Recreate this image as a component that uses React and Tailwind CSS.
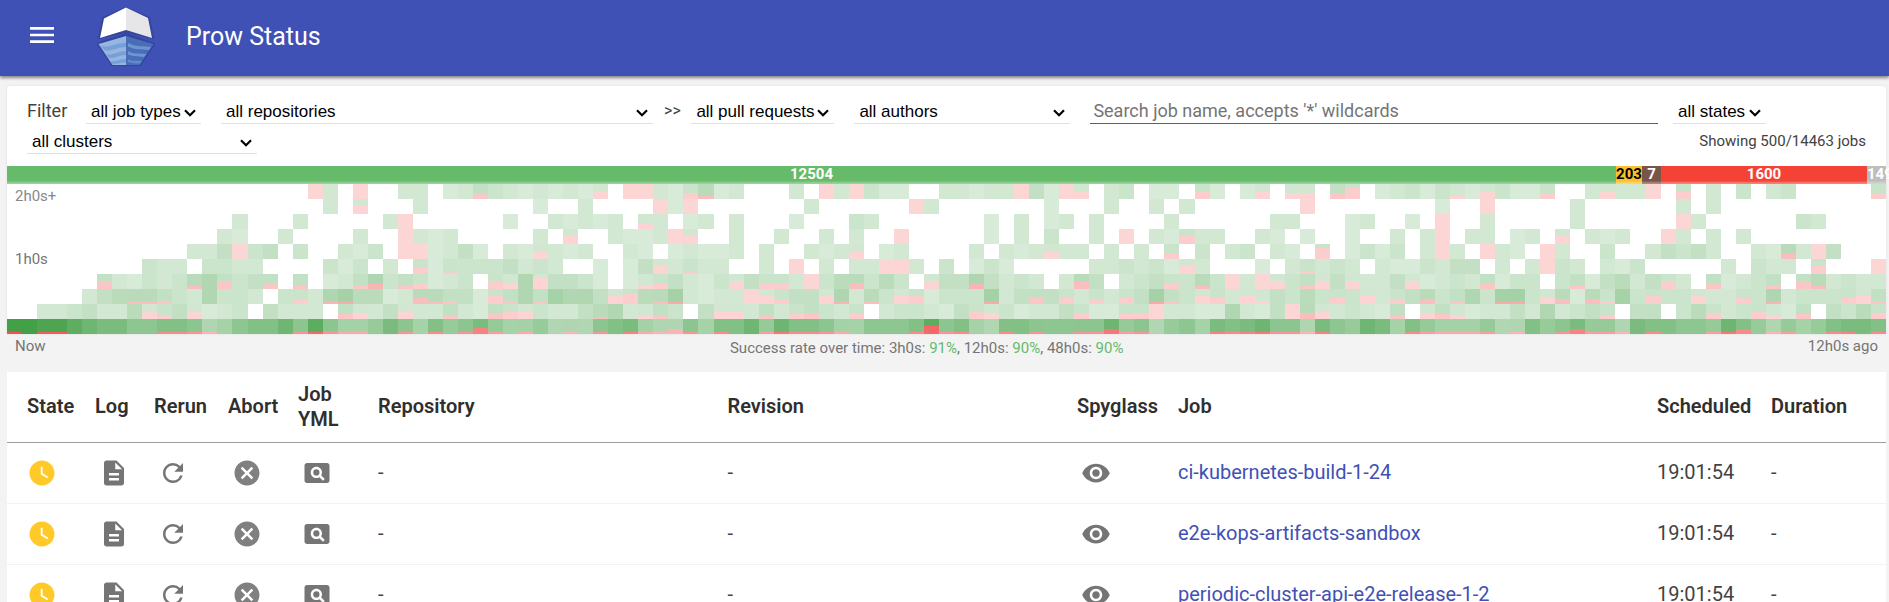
import React from "react";
import {
  MdCancel,
  MdDescription,
  MdMenu,
  MdPageview,
  MdRefresh,
  MdRemoveRedEye,
  MdWatchLater,
} from "react-icons/md";

// Job duration histogram. Rows run from the longest durations to the shortest,
// columns from now into the past. A cell is "." (no jobs) or a density key with
// an optional hex digit for the height of its failed share; "3x." repeats a cell.
const HISTOGRAM = [
  `20x. 2f 2 . 2f 2x. 2x2 . 1 2
   45 3 2 1 2 1 2 1 28 . 2f 2f 2 1 36 53 1 2 3x. 2 . 2f 2 2f 3 1 1 2x.
   2 2 1 2 2 2f 4 1 2f 28 . 2 3 . 1 1 . 38 1 . 1 28 . 26 26 . 46 3c . 1 2
   3 1 3 23 1 28 3 1 1 35 2x. 2 28 2 2 2f . 38 . 2 . 3 . 2 3 5x. 36`,
  `21x. 2 . 28 3x. 2 3x.
   4x. 1 2x. 2 4x. 2f 1 2f 7x. 2 6x. 2f 2
   7x. 1 3x. 2 2x. 2 . 2 7x. 2f 6x.
   2x. 1 2x. 2f 5x. 2 6x. 2 . 2 11x.`,
  `15x. 2 3x. 2 5x. 2 2f 4x.
   2x. 1 2x. 2 1 2 1 2 . 26 2 . 1 2 . 2 3x. 1 3x. 3 2 4x.
   3x. 1 . 2 . 1 2 . 2 4x. 2 6x. 2 2 3x. 1 2 2x.
   1 . 2f 2x. 2 5x. 2 6x. 2f 2 6x. 3 2 4x.`,
  `14x. 2 1 2x. 2 4x. 2 2x. 2f 2 1 2 .
   4x. 2 . 28 2x. 2 1 1 2 2f 28 2x. 2 2x. 2 2x. 2 . 2 2x. 2f 2x.
   3x. 1 . 2 . 3 2x. 2 . 2f . 2 1 38 2 2 2x. 2 1 . 1 2x. 1 2x. 2
   . 2 2f . 2 2 . 1 2 . 28 . 2 1 2 2x. 2f 2 . 2 . 2 9x.`,
  `12x. 2 2 4 2f 3 4 . 3 2x. 2 1 3 . 2f 2f 1 2 4
   1 . 2 1 28 2 1 2 2x. 2 1 . 1 2 1 1 2 . 2 2x. 2 1 2 28 . 1 2 2x.
   2x. 2 . 2 1 2 28 2 2 . 2 . 2 . 35 . 3 . 2 3 . 2 1 . 3b . 1 3 1 3
   . 2 2f 2 . 2f 2 1 . 2f 2 2x. 3 2x. 2 4 3 4 2 2x. 2 1 55 2 2f 4 3x.`,
  `9x. 3 2 2 . 3 3 2 2 4x. 3 1 3 . 2 . 36 1 33 3
   3 3 4 2 3 2 2x. 1 . 1 4 28 2 33 2 2 2x. 2 . 2f . 2 . 2 2 2f 2f 2 .
   3 . 1 3 1 5x. 2 2 3 2 3 1 28 2 3x. 1 . 2 33 2 3 2 . 2 1
   1 3 2 4 4 . 2 . 2 2f 3 2 . 2 1 3 5x. 2 . 3 2 2 . 38 3x. 2f`,
  `6x. 48 2 1 3 2 3 53 6 48 3 4 46 . 43 . 1 2 43 65 3 43 36 1 2 3
   . 38 26 6 2b 4 4 3 1 . 1 23 35 4 2 1 3 28 4 36 36 2 2f 3 5 56 3 5 3 . 28
   4 4 65 4 2 3 2 . 2 58 4 . 2 3 4 36 3 53 3 2f 2 2f 28 3 43 28 4 28 2 2 4
   28 1 2 3 2 46 1 3 3 . 3 43 1 4 5 2 4 38 2 . 46 1 2 3 43 . 48 53 2 3 2 2`,
  `5x. 2 4 5 53 53 43 3 2 6 3 3 2 . 3 35 2 63 73 5 5 1 2 56 53 43 4
   1 38 43 6 42 7 6 6 4 28 3a 5 53 72 2 1 2 2 2f 28 35 4 4 28 63 2 53 3 28 38 1
   3 3 3 73 2 4 46 4 36 2 35 2 36 4 72 43 3 28 36 2 28 23 4 3 5 3 36 3 28 2 35
   4 55 3 42 6 3 72 73 3 26 55 1 55 33 7 3 38 3 3 28 2 2 36 3 62 2 3 3 3 36 28 43`,
  `2x. 2 2 3 4 2 2 5 28 33 4 28 1 2 3 . 4 2 2 2 . 45 26 2 4 28 2 2 43 2
   1 45 38 28 3 2 2 4 52 6 2 23 43 3 . 4 28 28 2 43 2 35 46 3 2 35 . 2 3 3 2
   1 4 38 26 3 1 2 2 4 35 1 1 35 36 2f 2 2 1 1 6 2 1 4 2f 56 28 2 3 2 1 43
   . 26 45 23 1 2 2 4 2 6 2 3 4 33 . 4 4 . 3 5 36 2 3 38 23 1 45 . 4 3 5 36`,
  `G2 G E2 E2 D C B B 9 9 A2 A2 92 62 7 9 A A C 92 D2 93 72 72 8 B 92 7 A2 8 92
   B6 82 7 72 8 6 62 6 92 A B2 72 62 65 92 7 A2 A C 82 C2 A2 A2 92 72 7 9 9 9 A2 D8
   92 A2 7 6 A2 A 92 9 9 92 92 C5 82 92 6 8 9 7 B2 A2 B2 C2 92 92 62 B2 9 8 C B 7
   A2 82 72 72 72 82 6 62 A 8 92 B5 82 82 62 B A2 A 9 9 82 C2 A5 8 62 82 7 8 A2 B2 B A2`,
];

const DENSITY = {
  1: 0.21, 2: 0.24, 3: 0.28, 4: 0.32, 5: 0.37, 6: 0.42, 7: 0.48, 8: 0.55,
  9: 0.6, A: 0.66, B: 0.7, C: 0.77, D: 0.86, E: 0.94, G: 1,
};

const COLUMNS = 125;
const CELL = 15;

function parseRow(text) {
  return text.trim().split(/\s+/).flatMap((token) => {
    const [, count, cell] = token.match(/^(?:(\d+)x)?(.+)$/);
    return Array(count ? Number(count) : 1).fill(cell);
  });
}

function Histogram() {
  return (
    <svg
      viewBox={`0 0 ${COLUMNS * CELL} ${HISTOGRAM.length * CELL}`}
      preserveAspectRatio="none"
      shapeRendering="crispEdges"
      className="block h-[150px] w-full"
      aria-label="Job durations over time"
    >
      {HISTOGRAM.map((text, row) =>
        parseRow(text).map((cell, col) => {
          if (cell === ".") return null;
          const failed = cell[1] ? parseInt(cell[1], 16) : 0;
          const x = col * CELL;
          const y = row * CELL;
          return (
            <g key={`${row}-${col}`} opacity={DENSITY[cell[0]]}>
              {failed < CELL && (
                <rect x={x} y={y} width={CELL} height={CELL - failed} fill="#43a047" />
              )}
              {failed > 0 && (
                <rect x={x} y={y + CELL - failed} width={CELL} height={failed} fill="#f35050" />
              )}
            </g>
          );
        })
      )}
    </svg>
  );
}

function Logo() {
  return (
    <svg viewBox="0 0 60 62" className="h-[62px] w-[60px]" aria-hidden="true">
      <g fill="#2f4093" stroke="#2f4093" strokeWidth="2" strokeLinejoin="round" opacity="0.7">
        <path d="M30 3 53 13 57 33 30 26.500 3 33 7 13Z" />
        <path d="M30 29 58 39 44 60H16L2 39Z" />
      </g>
      <path d="M30 2.500V25L4 33 8 13.500Z" fill="#fff" />
      <path d="M30 2.500V25L56 33 52 13Z" fill="#e6e6e9" />
      <path d="M30 31V60H16.500L2.500 39Z" fill="#96b5e1" />
      <path d="M30 31V60H43.500L57.500 39Z" fill="#4a6db8" />
      <path d="M5 41C14 43 22 37 30 38V42C22 42 15 47 8 45Z" fill="#78a0d8" />
      <path d="M10.500 49.500C18 50 23 46 30 46V50C23 50 18 54 13 53Z" fill="#78a0d8" />
      <path d="M14.500 56C20 57 24 54 30 54V57.500C25 57.500 21 59 16.500 59Z" fill="#78a0d8" />
      <path d="M32 38C40 42 48 41 55 42L53 45C46 44 39 45 32 41.500Z" fill="#6c95d4" />
      <path d="M32 46C38 50 45 48 50.500 49L48 52C42 51 38 52 32 49.500Z" fill="#6c95d4" />
      <path d="M32 54C37 57 42 55 46 56L44 58.500C39 58.500 36 58.500 32 57Z" fill="#6088ca" />
    </svg>
  );
}

function FilterSelect({ label, value, className }) {
  return (
    <div className={`relative ${className}`}>
      <select
        aria-label={label}
        className="block h-[26px] w-full appearance-none border-b border-black/12 bg-transparent pt-0.5 pl-[5px] font-['Liberation_Sans',Arial,sans-serif] text-[17px] leading-[23px] text-black outline-none"
      >
        <option>{value}</option>
      </select>
      <svg
        viewBox="0 0 12 8"
        className="pointer-events-none absolute top-[11px] right-[5px] h-2 w-3"
        fill="none"
        stroke="#000"
        strokeWidth="2.200"
        aria-hidden="true"
      >
        <path d="M1 1.200 6 6.200 11 1.200" />
      </svg>
    </div>
  );
}

const SEGMENTS = [
  { state: "success", count: "12504", className: "flex-[1609] bg-[#66bb6a] text-white" },
  { state: "pending", count: "203", className: "w-[26px] bg-[#fbc02d] text-black" },
  { state: "aborted", count: "7", className: "w-[19px] bg-[#795548] text-white" },
  { state: "failure", count: "1600", className: "flex-[206] bg-[#f44336] text-white" },
  { state: "error", count: "149", className: "w-[19px] bg-[#bdbdbd] text-white" },
];

const JOBS = [
  { name: "ci-kubernetes-build-1-24", scheduled: "19:01:54" },
  { name: "e2e-kops-artifacts-sandbox", scheduled: "19:01:54" },
  { name: "periodic-cluster-api-e2e-release-1-2", scheduled: "19:01:54" },
];

const HEADINGS = [
  ["State", "w-[68px]"],
  ["Log", "w-[59px]"],
  ["Rerun", "w-[74px]"],
  ["Abort", "w-[70px]"],
  ["Job YML", "w-[80px]"],
  ["Repository", "w-[18.600%]"],
  ["Revision", "w-[18.600%]"],
  ["Spyglass", "w-[101px]"],
  ["Job", ""],
  ["Scheduled", "w-[114px]"],
  ["Duration", "w-[135px]"],
];

const iconClass = "ml-1 block text-[#757575]";

function JobRow({ job }) {
  return (
    <tr className="h-[61px] border-b border-black/5 [&>td]:pl-5">
      <td>
        <MdWatchLater size={30} className="block text-[#ffca28]" aria-label="pending" />
      </td>
      <td>
        <a href="#log" aria-label="Log" className={iconClass}><MdDescription size={30} /></a>
      </td>
      <td>
        <button type="button" aria-label="Rerun" className={iconClass}><MdRefresh size={30} /></button>
      </td>
      <td>
        <button type="button" aria-label="Abort" className={iconClass}><MdCancel size={30} className="text-[#808080]" /></button>
      </td>
      <td>
        <a href="#yaml" aria-label="Job YML" className={iconClass}><MdPageview size={30} /></a>
      </td>
      <td>-</td>
      <td>-</td>
      <td>
        <a href="#spyglass" aria-label="Spyglass" className={iconClass}><MdRemoveRedEye size={30} /></a>
      </td>
      <td className="whitespace-nowrap">
        <a href="#job" className="text-[#3f51b5]">{job.name}</a>
      </td>
      <td>{job.scheduled}</td>
      <td>-</td>
    </tr>
  );
}

export default function App() {
  return (
    <div className="min-h-screen overflow-x-clip bg-[#f3f3f3] font-[Roboto,sans-serif] text-[#424242]">
      <header className="relative flex h-[76px] items-center bg-[#3f51b5] pl-[26px] text-white shadow-[0_2px_3px_rgba(0,0,0,0.45)]">
        <button type="button" aria-label="Menu" className="-mt-1.5">
          <MdMenu size={32} />
        </button>
        <a href="#home" aria-label="Prow" className="-mt-1 ml-[38px]">
          <Logo />
        </a>
        <h1 className="-mt-0.5 ml-[30px] text-[25px] leading-8">Prow Status</h1>
      </header>

      <main className="pt-[10px] pr-[3px] pl-[7px]">
        <section className="rounded-t-sm bg-white shadow-[0_0_3px_rgba(0,0,0,0.08)]">
          <form className="flex flex-col gap-1 px-5 py-3">
            <div className="mr-[100px] flex items-center">
              <span className="w-[59px] text-[18px] leading-6">Filter</span>
              <FilterSelect label="Job type" value="all job types" className="w-[115px]" />
              <FilterSelect label="Repository" value="all repositories" className="ml-5 flex-[435]" />
              <span className="w-[38px] text-center text-[16px] leading-6">&gt;&gt;</span>
              <FilterSelect label="Pull request" value="all pull requests" className="w-[143px]" />
              <FilterSelect label="Author" value="all authors" className="ml-5 w-[216px]" />
              <input
                type="text"
                aria-label="Job name"
                placeholder="Search job name, accepts '*' wildcards"
                className="mr-[15px] ml-5 h-[26px] min-w-0 flex-[565] border-b border-[#616161] bg-transparent px-[3px] text-[18px] leading-6 outline-none placeholder:text-[#757575]"
              />
              <FilterSelect label="State" value="all states" className="w-[93px]" />
            </div>
            <div className="flex items-center justify-between">
              <FilterSelect label="Cluster" value="all clusters" className="w-[230px]" />
              <span className="text-[15px] leading-6">Showing 500/14463 jobs</span>
            </div>
          </form>

          <div className="flex h-[18px] text-center text-[15px] leading-4 font-bold">
            {SEGMENTS.map(({ state, count, className }) => (
              <div
                key={state}
                title={state}
                className={`min-w-0 shadow-[inset_0_-3px_2px_-1px_rgba(255,255,255,0.35)] ${className}`}
              >
                {count}
              </div>
            ))}
          </div>

          <div className="relative text-[15px] leading-5 text-[#757575]">
            <Histogram />
            <span className="absolute top-[2px] left-2 text-[#888888]">2h0s+</span>
            <span className="absolute top-[65px] left-2">1h0s</span>
          </div>
        </section>

        <div className="flex h-[38px] items-start justify-between px-2 pt-[2px] text-[15px] leading-5 text-[#757575]">
          <span>Now</span>
          <span className="pt-[2px]">
            Success rate over time: 3h0s: <span className="text-[#66bb6a]">91%</span>, 12h0s:{" "}
            <span className="text-[#66bb6a]">90%</span>, 48h0s:{" "}
            <span className="text-[#66bb6a]">90%</span>
          </span>
          <span>12h0s ago</span>
        </div>

        <table className="w-full table-fixed border-collapse bg-white text-left text-[20px] leading-[25px]">
          <thead>
            <tr className="h-[70px] border-b border-[#9e9e9e] text-[#2f2f2f]">
              {HEADINGS.map(([title, width]) => (
                <th key={title} scope="col" className={`pl-5 font-semibold ${width}`}>
                  {title}
                </th>
              ))}
            </tr>
          </thead>
          <tbody>
            {JOBS.map((job) => (
              <JobRow key={job.name} job={job} />
            ))}
          </tbody>
        </table>
      </main>
    </div>
  );
}
